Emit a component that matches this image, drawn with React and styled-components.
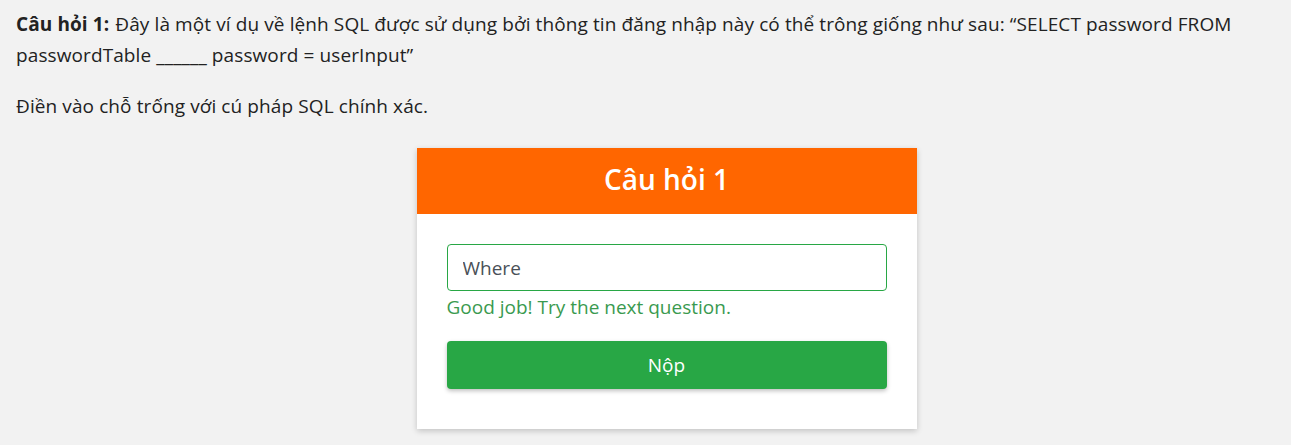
import React, { useState } from 'react'
import styled, { createGlobalStyle } from 'styled-components'

const GlobalStyle = createGlobalStyle`
  body {
    margin: 0;
    background: #f2f2f2;
    font-family: "Open Sans", "Noto Sans", sans-serif;
    color: #222;
  }
`

const Page = styled.div`
  padding: 9px 16px 16px;
`

const Paragraph = styled.p`
  margin: 0 0 20px;
  font-size: 19px;
  line-height: 31px;
  letter-spacing: 0.1px;
`

const Lead = styled.strong`
  font-weight: 700;
  margin-right: 1px;
`

const CardRow = styled.div`
  display: flex;
  justify-content: center;
  padding-left: 42px;
  margin-top: 26px;
`

const Card = styled.div`
  width: 500px;
  background: #fff;
  box-shadow: 0 2px 6px rgba(0, 0, 0, 0.2);
`

const CardHeader = styled.h2`
  box-sizing: border-box;
  margin: 0;
  height: 66px;
  padding-bottom: 5px;
  display: flex;
  align-items: center;
  justify-content: center;
  background: #ff6600;
  color: #fff;
  font-size: 28px;
  font-weight: 600;
`

const CardBody = styled.div`
  padding: 30px 30px 40px;
  display: flex;
  flex-direction: column;
`

const AnswerInput = styled.input`
  box-sizing: border-box;
  height: 47px;
  width: 100%;
  padding: 0 15px;
  border: 1px solid #28a745;
  border-radius: 4px;
  font-family: inherit;
  font-size: 19px;
  color: #495057;
  outline: none;
`

const Feedback = styled.div`
  margin-top: 4px;
  font-size: 19px;
  line-height: 24px;
  color: #3a9a4f;
`

const SubmitButton = styled.button`
  margin-top: 22px;
  height: 48px;
  border: none;
  border-radius: 4px;
  background: #28a745;
  color: #fff;
  font-family: inherit;
  font-size: 19px;
  box-shadow: 0 2px 4px rgba(0, 0, 0, 0.25);
  cursor: pointer;
`

export default function App() {
  const [answer, setAnswer] = useState('Where')

  return <Page>
    <GlobalStyle/>
    <Paragraph>
      <Lead>Câu hỏi 1:</Lead> Đây là một ví dụ về lệnh SQL được sử dụng bởi thông tin đăng nhập này có thể trông giống như sau: “SELECT password FROM passwordTable ______ password = userInput”
    </Paragraph>
    <Paragraph>Điền vào chỗ trống với cú pháp SQL chính xác.</Paragraph>
    <CardRow>
      <Card>
        <CardHeader>Câu hỏi 1</CardHeader>
        <CardBody>
          <AnswerInput value={answer} onChange={(e) => setAnswer(e.target.value)}/>
          <Feedback>Good job! Try the next question.</Feedback>
          <SubmitButton>Nộp</SubmitButton>
        </CardBody>
      </Card>
    </CardRow>
  </Page>
}
